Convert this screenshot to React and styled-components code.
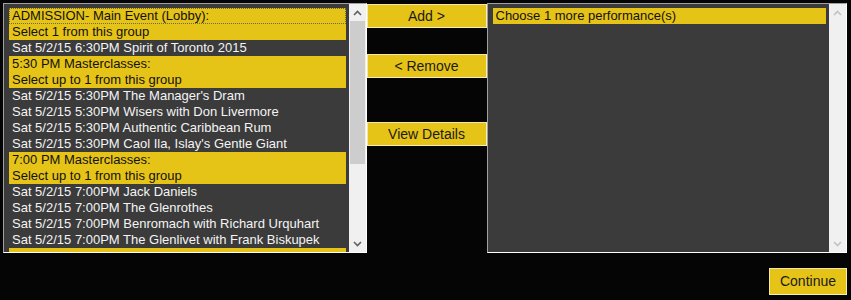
import React from "react";
import styled, { createGlobalStyle } from "styled-components";

const GlobalStyles = createGlobalStyle`
  html, body {
    margin: 0;
    padding: 0;
    background: #050505;
  }
  body {
    font-family: "Liberation Sans", Arial, sans-serif;
  }
`;

const YELLOW = "#e6c317";

const Page = styled.div`
  width: 851px;
  height: 300px;
  box-sizing: border-box;
  padding: 3px 4px 0 3px;
  display: flex;
  flex-direction: column;
`;

const Top = styled.div`
  display: flex;
  align-items: flex-start;
`;

const ListBox = styled.div`
  width: ${p => p.w}px;
  height: ${p => p.h}px;
  box-sizing: border-box;
  display: flex;
  border-top: 1px solid #a0a0a0;
  border-left: 1px solid #a0a0a0;
  border-right: 1px solid #ffffff;
  border-bottom: 1px solid #ffffff;
  background: #3b3b3b;
`;

const Items = styled.div`
  flex: 1;
  overflow: hidden;
  padding: 4px 3px 0 5px;
`;

const Item = styled.div`
  height: 16px;
  line-height: 16px;
  font-size: 13px;
  padding-left: 3px;
  white-space: nowrap;
  color: ${p => (p.head ? "#111" : "#f4f4f4")};
  background: ${p => (p.head ? YELLOW : "transparent")};
  outline: ${p => (p.focus ? "1px dotted #6a6a3a" : "none")};
  outline-offset: -1px;
`;

const Scroll = styled.div`
  width: 17px;
  background: #f0f0f0;
  display: flex;
  flex-direction: column;
  align-items: center;
`;

const Arrow = styled.div`
  height: 17px;
  width: 17px;
  display: flex;
  align-items: center;
  justify-content: center;
`;

const Track = styled.div`
  flex: 1;
  width: 100%;
  display: flex;
  flex-direction: column;
`;

const Thumb = styled.div`
  width: 15px;
  margin: 0 auto;
  height: ${p => p.h}px;
  background: #cdcdcd;
`;

const Buttons = styled.div`
  width: 120px;
  display: flex;
  flex-direction: column;
  padding-top: 1px;
`;

const Btn = styled.div`
  height: ${p => p.h || 24}px;
  box-sizing: border-box;
  width: ${p => p.w || 120}px;
  margin-top: ${p => p.mt || 0}px;
  background: ${YELLOW};
  border-top: 1px solid #f3e7a8;
  border-left: 1px solid #f3e7a8;
  border-bottom: 1px solid #f6eeb9;
  border-right: 1px solid #f6eeb9;
  color: #1a1a1a;
  font-size: 14px;
  line-height: ${p => (p.h || 24) - 2}px;
  text-align: center;
`;

const Footer = styled.div`
  display: flex;
  justify-content: flex-end;
  margin-top: 15px;
`;

const Chevron = ({ up, color }) => (
  <svg width="9" height="6" viewBox="0 0 9 6">
    <path
      d={up ? "M1 5 L4.5 1.5 L8 5" : "M1 1 L4.5 4.5 L8 1"}
      fill="none"
      stroke={color}
      strokeWidth="1.6"
    />
  </svg>
);

const left = [
  ["ADMISSION- Main Event (Lobby):", true],
  ["Select 1 from this group", true],
  ["Sat 5/2/15 6:30PM Spirit of Toronto 2015"],
  ["5:30 PM Masterclasses:", true],
  ["Select up to 1 from this group", true],
  ["Sat 5/2/15 5:30PM The Manager's Dram"],
  ["Sat 5/2/15 5:30PM Wisers with Don Livermore"],
  ["Sat 5/2/15 5:30PM Authentic Caribbean Rum"],
  ["Sat 5/2/15 5:30PM Caol Ila, Islay's Gentle Giant"],
  ["7:00 PM Masterclasses:", true],
  ["Select up to 1 from this group", true],
  ["Sat 5/2/15 7:00PM Jack Daniels"],
  ["Sat 5/2/15 7:00PM The Glenrothes"],
  ["Sat 5/2/15 7:00PM Benromach with Richard Urquhart"],
  ["Sat 5/2/15 7:00PM The Glenlivet with Frank Biskupek"],
  ["", true],
];

export default function App() {
  return (
    <Page>
      <GlobalStyles />
      <Top>
        <ListBox w={364} h={250}>
          <Items>
            {left.map(([t, head], i) => (
              <Item key={i} head={head} focus={i === 0}>
                {t}
              </Item>
            ))}
          </Items>
          <Scroll>
            <Arrow>
              <Chevron up color="#606060" />
            </Arrow>
            <Track>
              <Thumb h={143} />
            </Track>
            <Arrow>
              <Chevron color="#606060" />
            </Arrow>
          </Scroll>
        </ListBox>
        <Buttons>
          <Btn>Add &gt;</Btn>
          <Btn mt={26}>&lt; Remove</Btn>
          <Btn mt={44}>View Details</Btn>
        </Buttons>
        <ListBox w={361} h={250}>
          <Items>
            <Item head>Choose 1 more performance(s)</Item>
          </Items>
          <Scroll>
            <Arrow>
              <Chevron up color="#c2c2c2" />
            </Arrow>
            <Track />
            <Arrow>
              <Chevron color="#c2c2c2" />
            </Arrow>
          </Scroll>
        </ListBox>
      </Top>
      <Footer>
        <Btn w={78} h={27}>Continue</Btn>
      </Footer>
    </Page>
  );
}
